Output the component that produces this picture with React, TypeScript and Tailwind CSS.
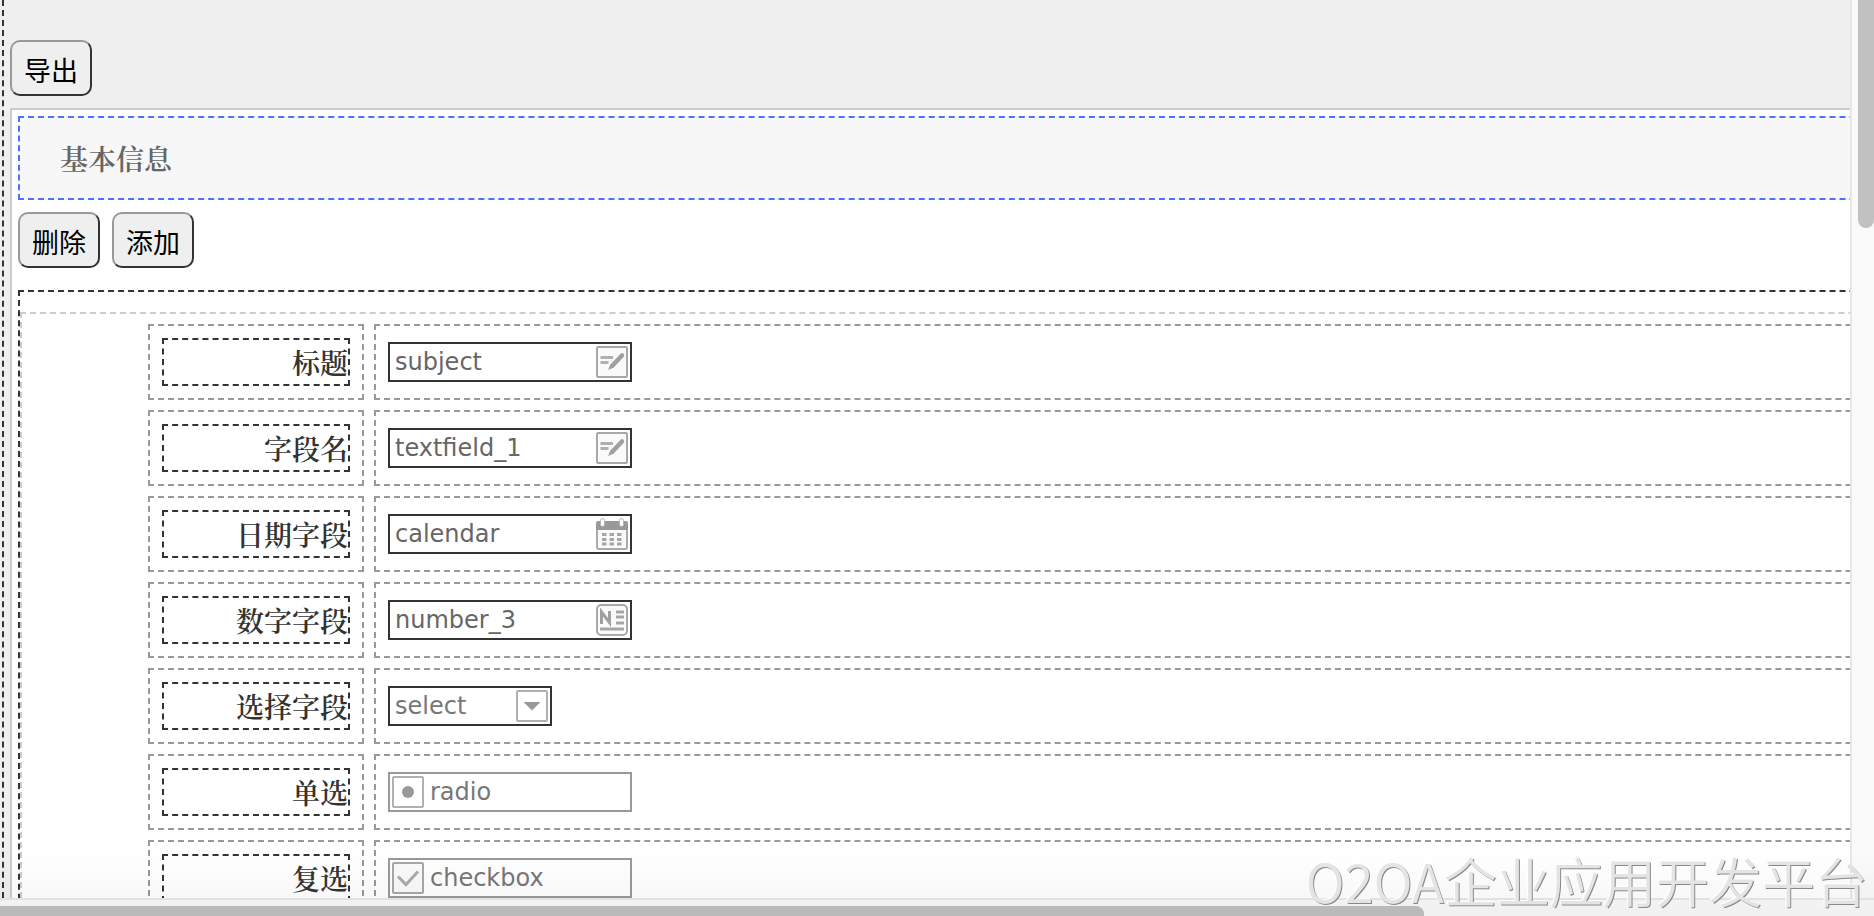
import React, { useState } from "react";

type FieldKind = "text" | "date" | "number" | "select" | "radio" | "checkbox";

interface Field {
  id: string;
  label: string;
  kind: FieldKind;
}

const fields: Field[] = [
  { id: "subject", label: "标题", kind: "text" },
  { id: "textfield_1", label: "字段名", kind: "text" },
  { id: "calendar", label: "日期字段", kind: "date" },
  { id: "number_3", label: "数字字段", kind: "number" },
  { id: "select", label: "选择字段", kind: "select" },
  { id: "radio", label: "单选", kind: "radio" },
  { id: "checkbox", label: "复选", kind: "checkbox" },
];

function EditIcon() {
  return (
    <svg viewBox="0 0 32 32" className="h-8 w-8 shrink-0" fill="none" aria-hidden="true">
      <rect x="1" y="1" width="30" height="30" rx="1" fill="#fafafa" stroke="#a8a8a8" strokeWidth="2" />
      <path d="M4.500 11.500h12.500M4.500 16.500h8" stroke="#b0b0b0" strokeWidth="3" />
      <path d="M26 9.500 16.500 19.500" stroke="#a0a0a0" strokeWidth="4.500" strokeLinecap="round" />
      <path d="m14.500 18-2.500 6 6-2.500z" fill="#a0a0a0" />
    </svg>
  );
}

function CalendarIcon() {
  return (
    <svg viewBox="0 0 32 32" className="h-8 w-8 shrink-0" fill="none" aria-hidden="true">
      <path d="M1 11v18.500a1.500 1.500 0 0 0 1.500 1.500h27a1.500 1.500 0 0 0 1.500-1.500V11" fill="#fafafa" stroke="#aaa" strokeWidth="2" />
      <path d="M0 12V5a2 2 0 0 1 2-2h28a2 2 0 0 1 2 2v7z" fill="#999" />
      <rect x="4.500" y="0.500" width="4" height="8" rx="2" fill="#fff" stroke="#b5b5b5" />
      <rect x="23.500" y="0.500" width="4" height="8" rx="2" fill="#fff" stroke="#b5b5b5" />
      <path d="M6 16.500h4.500m3 0h4.500m3 0h4.500M6 21.500h4.500m3 0h4.500m3 0h4.500M6 26h4.500m3 0h4.500m3 0h4.500" stroke="#a6a6a6" strokeWidth="3" />
    </svg>
  );
}

function NumberIcon() {
  return (
    <svg viewBox="0 0 32 32" className="h-8 w-8 shrink-0" fill="none" aria-hidden="true">
      <rect x="1" y="1" width="30" height="30" rx="4" fill="#fafafa" stroke="#a8a8a8" strokeWidth="2" />
      <path d="M5.500 20V8l8 10.500V7" stroke="#a0a0a0" strokeWidth="3" />
      <path d="M20 8h8M20 13h8M20 19h8M4 25h24" stroke="#a6a6a6" strokeWidth="3" />
    </svg>
  );
}

function ArrowIcon() {
  return (
    <svg viewBox="0 0 32 32" className="h-8 w-8" fill="none" aria-hidden="true">
      <rect x="1" y="1" width="30" height="30" rx="1" fill="#fff" stroke="#b0b0b0" strokeWidth="2" />
      <path d="M7.500 12h17L16 20.500z" fill="#999" />
    </svg>
  );
}

function RadioIcon() {
  return (
    <svg viewBox="0 0 32 32" className="h-8 w-8" fill="none" aria-hidden="true">
      <rect x="1" y="1" width="30" height="30" rx="1" fill="#fff" stroke="#b0b0b0" strokeWidth="2" />
      <circle cx="16" cy="16" r="6" fill="#999" />
    </svg>
  );
}

function CheckIcon() {
  return (
    <svg viewBox="0 0 32 32" className="h-8 w-8" fill="none" aria-hidden="true">
      <rect x="1" y="1" width="30" height="30" rx="1" fill="#fafafa" stroke="#a8a8a8" strokeWidth="2" />
      <path d="m6 14.500 8 8L26 9.500" stroke="#aaa" strokeWidth="3" />
    </svg>
  );
}

function ActionButton({ children }: { children: React.ReactNode }) {
  return (
    <button
      type="button"
      className="h-14 rounded-[10px] border-2 border-t-[#999] border-l-[#999] border-r-[#333] border-b-[#333] bg-[#efefef] px-3 pt-1 font-['Noto_Sans_CJK_SC',sans-serif] text-[27px] leading-8 text-black"
    >
      {children}
    </button>
  );
}

function FieldControl({ field }: { field: Field }) {
  const [value, setValue] = useState<string>(field.id);
  const [checked, setChecked] = useState<boolean>(true);

  if (field.kind === "select") {
    return (
      <div className="relative h-10 w-41 border-2 border-[#333] bg-white">
        <select id={field.id} className="h-full w-full appearance-none pl-[5px] text-[#777] outline-none">
          <option>select</option>
        </select>
        <span className="pointer-events-none absolute top-[2px] right-[2px]">
          <ArrowIcon />
        </span>
      </div>
    );
  }

  if (field.kind === "radio" || field.kind === "checkbox") {
    return (
      <label className="flex h-10 w-61 items-center gap-[6px] border-2 border-[#999] bg-white pl-[2px] text-[#777]">
        <span className="relative h-8 w-8">
          <input
            id={field.id}
            type={field.kind}
            checked={checked}
            onChange={() => setChecked(field.kind === "radio" || !checked)}
            className="absolute inset-0 appearance-none"
          />
          {field.kind === "radio" ? <RadioIcon /> : <CheckIcon />}
        </span>
        {field.id}
      </label>
    );
  }

  return (
    <div className="flex h-10 w-61 items-center border-2 border-[#333] bg-white pr-[2px]">
      <input
        id={field.id}
        type="text"
        value={value}
        onChange={(e) => setValue(e.target.value)}
        className="min-w-0 flex-1 pl-[5px] text-[#666] outline-none"
      />
      {field.kind === "text" && <EditIcon />}
      {field.kind === "date" && <CalendarIcon />}
      {field.kind === "number" && <NumberIcon />}
    </div>
  );
}

export default function App() {
  return (
    <div className="relative flex h-screen flex-col overflow-hidden bg-[#fafafa]">
      <div className="flex min-h-0 flex-1">
        {/* Form canvas, wider than its viewport */}
        <main className="min-w-0 flex-1 overflow-hidden bg-[#efefef] pl-[2px]">
          <div className="w-[130%] border-l-2 border-dashed border-[#333] pt-10 pl-[6px]">
            <ActionButton>导出</ActionButton>

            <section className="mt-3 border-2 border-[#ccc] bg-white p-[6px]">
              <h2 className="flex h-21 items-center border-2 border-dashed border-[#4a72ff] bg-[#f7f7f7] pl-10 font-['Noto_Serif_CJK_SC','Liberation_Serif','Noto_Sans_CJK_SC',serif] text-[28px] font-semibold text-[#666]">
                基本信息
              </h2>

              <div className="mt-3 flex gap-3">
                <ActionButton>删除</ActionButton>
                <ActionButton>添加</ActionButton>
              </div>

              <div className="mt-[22px] border-2 border-dashed border-[#333] pt-5">
                <div className="flex flex-col gap-[10px] border-2 border-dashed border-[#ccc] py-[10px] pl-[126px] font-['DejaVu_Sans',sans-serif] text-[24px]">
                  {fields.map((field) => (
                    <div key={field.id} className="flex gap-[10px]">
                      <div className="w-54 border-2 border-dashed border-[#999] p-3">
                        <label
                          htmlFor={field.id}
                          className="flex h-12 items-center justify-end border-2 border-dashed border-[#333] font-['Noto_Serif_CJK_SC','Liberation_Serif','Noto_Sans_CJK_SC',serif] text-[28px] font-semibold text-[#333]"
                        >
                          {field.label}
                        </label>
                      </div>
                      <div className="flex flex-1 items-center border-2 border-dashed border-[#999] px-3">
                        <FieldControl field={field} />
                      </div>
                    </div>
                  ))}
                </div>
              </div>
            </section>
          </div>
        </main>

        {/* Vertical scrollbar */}
        <div className="flex w-6 justify-end border-l-2 border-[#e7e7e7] bg-[#fafafa]">
          <div className="h-57 w-4 rounded-b-full bg-[#c1c1c1]" />
        </div>
      </div>

      {/* Horizontal scrollbar */}
      <div className="h-[18px] border-t-2 border-[#e8e8e8] bg-[#fafafa] pt-[6px]">
        <div className="h-full w-[76%] rounded-tr-lg bg-[#c1c1c1]" />
      </div>

      <div className="pointer-events-none absolute inset-x-0 bottom-0 h-16 bg-linear-to-b from-transparent to-black/4" />
      <p className="pointer-events-none absolute right-[6px] bottom-[6px] font-['Noto_Sans_CJK_SC',sans-serif] text-[53px] leading-15 font-[350] whitespace-nowrap text-[#e4e4e4] [text-shadow:1px_1px_0_#888,-1px_-1px_0_#fff]">
        O2OA企业应用开发平台
      </p>
    </div>
  );
}
